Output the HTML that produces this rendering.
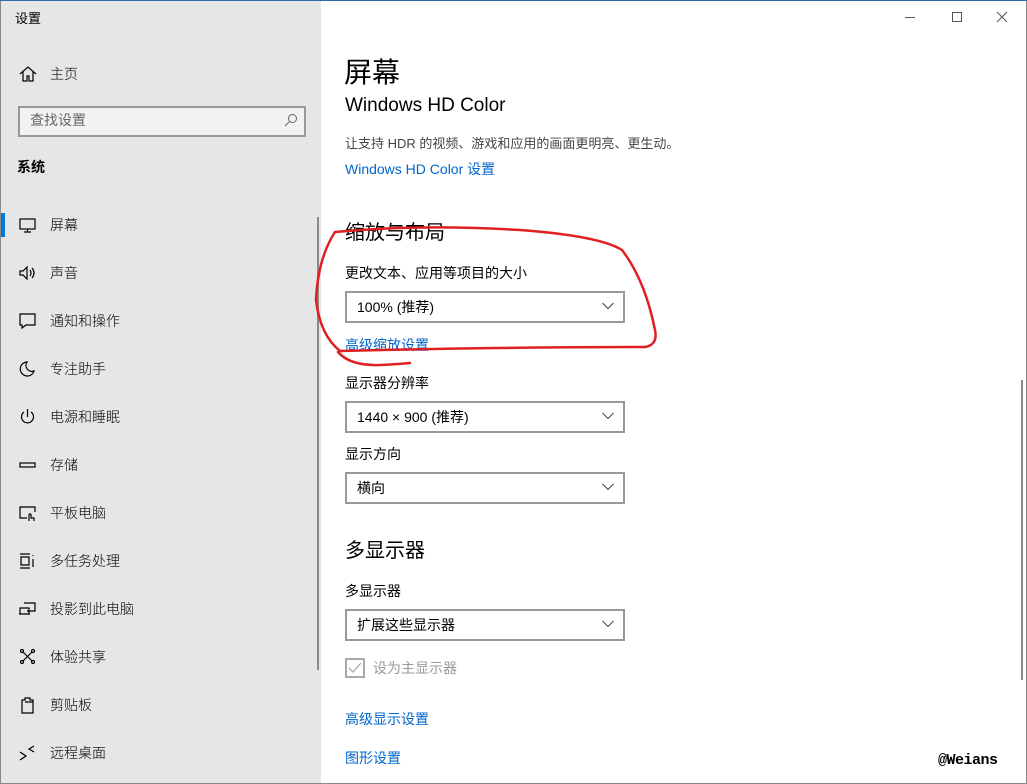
<!DOCTYPE html>
<html><head><meta charset="utf-8"><style>
*{margin:0;padding:0;box-sizing:border-box}
body{width:1027px;height:784px;overflow:hidden;background:#fff;font-family:"Liberation Sans","Noto Sans CJK SC",sans-serif;color:#000;position:relative}
.a{position:absolute;white-space:nowrap}
#side{position:absolute;left:0;top:0;width:321px;height:784px;background:#e6e6e6;border-left:1px solid #8a8a8a;border-bottom:1px solid #8a8a8a}
.it{position:absolute;left:49px;font-size:14px;line-height:20px;font-weight:300}
.ic{position:absolute;left:17px;width:20px;height:20px}
.dd{position:absolute;left:345px;width:280px;height:32px;border:2px solid #999;font-size:14px;line-height:28px;padding-left:10px}
.dd svg{position:absolute;right:9px;top:9px}
.lb{font-size:14px;line-height:20px}
.lk{font-size:14px;color:#0066cc;line-height:20px}
.h{font-size:20px;line-height:28px}
</style></head><body>
<div id="side">
<div class="a" style="left:14px;top:8px;font-size:13px">设置</div>
<svg class="ic" style="top:64px" viewBox="0 0 20 20" fill="none" stroke="#000" stroke-width="1.2"><path d="M2 10L10 3l8 7M5 8v9h4v-5h2v5h4V8"/></svg>
<div class="it" style="top:64px">主页</div>
<div class="a" style="left:17px;top:106px;width:288px;height:31px;border:2px solid #999;background:#f2f2f2"></div>
<div class="a" style="left:29px;top:110px;font-size:14px;line-height:20px;color:#666">查找设置</div>
<svg class="a" style="left:283px;top:113px" width="14" height="14" viewBox="0 0 14 14" fill="none" stroke="#666" stroke-width="1"><circle cx="8.5" cy="5.5" r="4"/><path d="M5.5 8.5L1 13"/></svg>
<div class="a" style="left:16px;top:157px;font-size:14px;font-weight:bold;line-height:20px">系统</div>
<div class="a" style="left:0;top:213px;width:4px;height:24px;background:#0078d7"></div>
<svg class="ic" style="top:215px" viewBox="0 0 20 20" fill="none" stroke="#000" stroke-width="1.2"><rect x="2" y="4" width="15" height="10"/><path d="M9.5 14v3M6 17h7"/></svg>
<div class="it" style="top:215px">屏幕</div>
<svg class="ic" style="top:263px" viewBox="0 0 20 20" fill="none" stroke="#000" stroke-width="1.2"><path d="M2 8h3l4-4v12l-4-4H2zM12 7q2 3 0 6M14 5q4 5 0 10"/></svg>
<div class="it" style="top:263px">声音</div>
<svg class="ic" style="top:311px" viewBox="0 0 20 20" fill="none" stroke="#000" stroke-width="1.2"><path d="M2 3h15v11H8l-4 3v-3H2z"/></svg>
<div class="it" style="top:311px">通知和操作</div>
<svg class="ic" style="top:359px" viewBox="0 0 20 20" fill="none" stroke="#000" stroke-width="1.2"><path d="M9 3a7 7 0 1 0 7 9A6 6 0 0 1 9 3z"/></svg>
<div class="it" style="top:359px">专注助手</div>
<svg class="ic" style="top:407px" viewBox="0 0 20 20" fill="none" stroke="#000" stroke-width="1.2"><path d="M9.5 2v8M6 5a6 6 0 1 0 7 0"/></svg>
<div class="it" style="top:407px">电源和睡眠</div>
<svg class="ic" style="top:455px" viewBox="0 0 20 20" fill="none" stroke="#000" stroke-width="1.2"><rect x="2" y="8" width="15" height="4"/></svg>
<div class="it" style="top:455px">存储</div>
<svg class="ic" style="top:503px" viewBox="0 0 20 20" fill="none" stroke="#000" stroke-width="1.2"><path d="M9 15H2V4h15v5M11 18v-6a1 1 0 0 1 2 0v3h3v3"/></svg>
<div class="it" style="top:503px">平板电脑</div>
<svg class="ic" style="top:551px" viewBox="0 0 20 20" fill="none" stroke="#000" stroke-width="1.2"><path d="M2 3h10M2 17h10M3 6h8v8H3zM15 4v1M15 8v8"/></svg>
<div class="it" style="top:551px">多任务处理</div>
<svg class="ic" style="top:599px" viewBox="0 0 20 20" fill="none" stroke="#000" stroke-width="1.2"><path d="M6 4h11v8H9M2 9h9v6H2zM1 15h11"/></svg>
<div class="it" style="top:599px">投影到此电脑</div>
<svg class="ic" style="top:647px" viewBox="0 0 20 20" fill="none" stroke="#000" stroke-width="1.2"><circle cx="4" cy="4" r="1.5"/><circle cx="15" cy="4" r="1.5"/><circle cx="4" cy="15" r="1.5"/><circle cx="15" cy="15" r="1.5"/><path d="M5 5l9 9M14 5l-9 9"/></svg>
<div class="it" style="top:647px">体验共享</div>
<svg class="ic" style="top:695px" viewBox="0 0 20 20" fill="none" stroke="#000" stroke-width="1.2"><path d="M4 5h3V3h5v2h3v13H4zM7 7h8"/></svg>
<div class="it" style="top:695px">剪贴板</div>
<svg class="ic" style="top:743px" viewBox="0 0 20 20" fill="none" stroke="#000" stroke-width="1.2"><path d="M2 9l6 4-6 4M16 3l-5 3 5 3"/></svg>
<div class="it" style="top:743px">远程桌面</div>
<div class="a" style="left:316px;top:217px;width:2px;height:453px;background:#8a8a8a"></div>
</div>
<div class="a" style="left:1026px;top:0;width:1px;height:784px;background:#8a8a8a"></div>
<div class="a" style="left:321px;top:783px;width:706px;height:1px;background:#8a8a8a"></div>
<div class="a" style="left:0;top:0;width:1027px;height:1px;background:#2b6ca3"></div>
<svg class="a" style="left:905px;top:11px" width="110" height="12" viewBox="0 0 110 12" fill="none" stroke="#555" stroke-width="1"><path d="M0 6.5h10M47.5 1.5h9v9h-9zM92 1l10 10M102 1L92 11"/></svg>
<div class="a" style="left:1021px;top:380px;width:2px;height:300px;background:#8a8a8a"></div>

<div class="a h" style="left:345px;top:92px;font-size:19px">Windows HD Color</div>
<div class="a" style="left:330px;top:40px;width:250px;height:56px;background:#fff"></div>
<div class="a" style="left:344px;top:55px;font-size:28px;line-height:36px">屏幕</div>
<div class="a lb" style="left:345px;top:134px;color:#444;font-size:13px">让支持 HDR 的视频、游戏和应用的画面更明亮、更生动。</div>
<div class="a lk" style="left:345px;top:159px">Windows HD Color 设置</div>
<div class="a h" style="left:345px;top:219px">缩放与布局</div>
<div class="a lb" style="left:345px;top:263px">更改文本、应用等项目的大小</div>
<div class="dd" style="top:291px">100% (推荐)<svg width="12" height="8" viewBox="0 0 12 8" fill="none" stroke="#444"><path d="M0.5 1l5.5 5.5L11.5 1"/></svg></div>
<div class="a lk" style="left:345px;top:335px">高级缩放设置</div>
<div class="a lb" style="left:345px;top:373px">显示器分辨率</div>
<div class="dd" style="top:401px">1440 × 900 (推荐)<svg width="12" height="8" viewBox="0 0 12 8" fill="none" stroke="#444"><path d="M0.5 1l5.5 5.5L11.5 1"/></svg></div>
<div class="a lb" style="left:345px;top:444px">显示方向</div>
<div class="dd" style="top:472px">横向<svg width="12" height="8" viewBox="0 0 12 8" fill="none" stroke="#444"><path d="M0.5 1l5.5 5.5L11.5 1"/></svg></div>
<div class="a h" style="left:345px;top:537px">多显示器</div>
<div class="a lb" style="left:345px;top:581px">多显示器</div>
<div class="dd" style="top:609px">扩展这些显示器<svg width="12" height="8" viewBox="0 0 12 8" fill="none" stroke="#444"><path d="M0.5 1l5.5 5.5L11.5 1"/></svg></div>
<div class="a" style="left:345px;top:658px;width:20px;height:20px;border:2px solid #aaa"></div>
<svg class="a" style="left:347px;top:660px" width="16" height="16" viewBox="0 0 16 16" fill="none" stroke="#aaa" stroke-width="1.3"><path d="M2 8l4 4 8-9"/></svg>
<div class="a lb" style="left:373px;top:658px;color:#999">设为主显示器</div>
<div class="a lk" style="left:345px;top:709px">高级显示设置</div>
<div class="a lk" style="left:345px;top:748px">图形设置</div>
<div class="a" style="left:938px;top:752px;font-size:15px;font-weight:bold;letter-spacing:-0.5px;font-family:'Liberation Mono',monospace">@Weians</div>

<svg class="a" style="left:0;top:0" width="1027" height="784" fill="none" stroke="#e02020" stroke-width="2.5" stroke-linecap="round">
<path d="M335 232Q420 224 520 230Q600 236 622 250Q645 280 655 330Q658 345 645 347Q500 347 340 351Q320 335 316 300Q318 258 335 232"/>
<path d="M338 352Q350 366 380 365Q400 364 410 363"/>
</svg>
</body></html>
